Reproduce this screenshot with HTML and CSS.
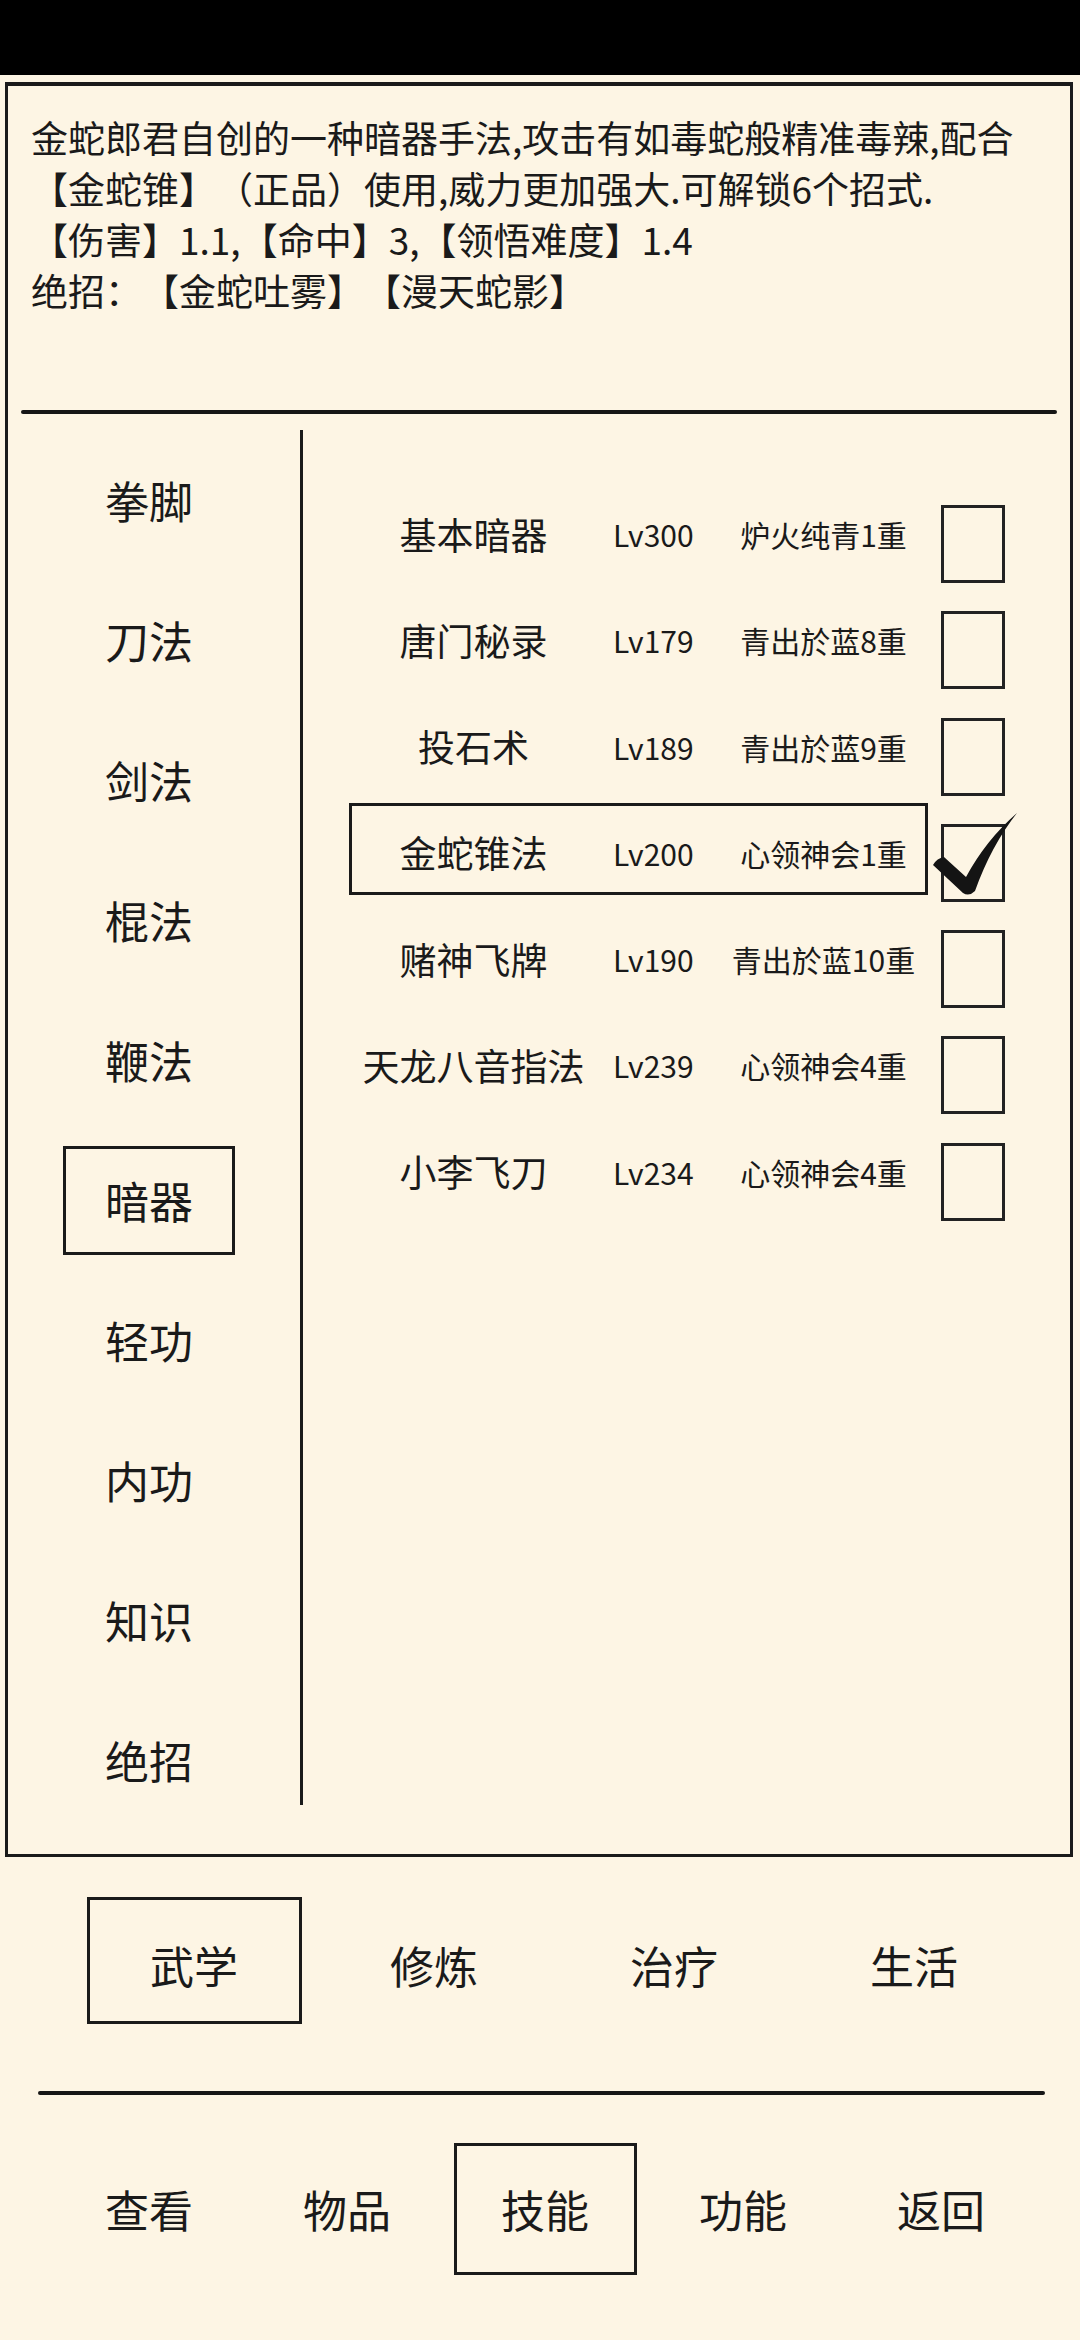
FILE: index.html
```html
<!DOCTYPE html>
<html lang="zh-CN">
<head>
<meta charset="utf-8">
<title>技能</title>
<link rel="stylesheet" href="styles.css">
</head>
<body>
<div class="statusbar"></div>
<div class="frame">
  <div class="desc">
    <div class="line">金蛇郎君自创的一种暗器手法,攻击有如毒蛇般精准毒辣,配合</div>
    <div class="line">【金蛇锥】（正品）使用,威力更加强大.可解锁6个招式.</div>
    <div class="line">【伤害】1.1,【命中】3,【领悟难度】1.4</div>
    <div class="line">绝招：【金蛇吐雾】【漫天蛇影】</div>
  </div>
  <div class="hr"></div>
  <div class="content">
    <div class="cats">
      <div class="cat"><span class="cat-label">拳脚</span></div>
      <div class="cat"><span class="cat-label">刀法</span></div>
      <div class="cat"><span class="cat-label">剑法</span></div>
      <div class="cat"><span class="cat-label">棍法</span></div>
      <div class="cat"><span class="cat-label">鞭法</span></div>
      <div class="cat"><span class="cat-label active">暗器</span></div>
      <div class="cat"><span class="cat-label">轻功</span></div>
      <div class="cat"><span class="cat-label">内功</span></div>
      <div class="cat"><span class="cat-label">知识</span></div>
      <div class="cat"><span class="cat-label">绝招</span></div>
    </div>
    <div class="vline"></div>
    <div class="list">
      <div class="row">
        <div class="main"><span class="name">基本暗器</span><span class="lv">Lv300</span><span class="stage">炉火纯青1重</span></div>
        <div class="box"></div>
      </div>
      <div class="row">
        <div class="main"><span class="name">唐门秘录</span><span class="lv">Lv179</span><span class="stage">青出於蓝8重</span></div>
        <div class="box"></div>
      </div>
      <div class="row">
        <div class="main"><span class="name">投石术</span><span class="lv">Lv189</span><span class="stage">青出於蓝9重</span></div>
        <div class="box"></div>
      </div>
      <div class="row">
        <div class="main selected"><span class="name">金蛇锥法</span><span class="lv">Lv200</span><span class="stage">心领神会1重</span></div>
        <div class="box checked">
          <svg class="tick" width="84" height="82" viewBox="0 0 84 82"><path d="M0,52 Q4,45 11,44 L33,64 Q53,27 84,0 Q58,33 42,78 Q36,84 30,80 Z" fill="#141414"/></svg>
        </div>
      </div>
      <div class="row">
        <div class="main"><span class="name">赌神飞牌</span><span class="lv">Lv190</span><span class="stage">青出於蓝10重</span></div>
        <div class="box"></div>
      </div>
      <div class="row">
        <div class="main"><span class="name">天龙八音指法</span><span class="lv">Lv239</span><span class="stage">心领神会4重</span></div>
        <div class="box"></div>
      </div>
      <div class="row">
        <div class="main"><span class="name">小李飞刀</span><span class="lv">Lv234</span><span class="stage">心领神会4重</span></div>
        <div class="box"></div>
      </div>
    </div>
  </div>
</div>
<div class="tabs">
  <div class="tab"><span class="tab-label active">武学</span></div>
  <div class="tab"><span class="tab-label">修炼</span></div>
  <div class="tab"><span class="tab-label">治疗</span></div>
  <div class="tab"><span class="tab-label">生活</span></div>
</div>
<div class="hr2"></div>
<div class="nav">
  <div class="nav-item"><span class="nav-label">查看</span></div>
  <div class="nav-item"><span class="nav-label">物品</span></div>
  <div class="nav-item"><span class="nav-label active">技能</span></div>
  <div class="nav-item"><span class="nav-label">功能</span></div>
  <div class="nav-item"><span class="nav-label">返回</span></div>
</div>
</body>
</html>
```

FILE: styles.css
```css
* { box-sizing: border-box; }
html, body {
  margin: 0;
  padding: 0;
}
body {
  width: 1080px;
  height: 2340px;
  background: #fdf5e4;
  color: #1a1a1a;
  font-family: "Noto Sans CJK SC", "Noto Sans", sans-serif;
  text-spacing-trim: space-all;
  overflow: hidden;
}
.statusbar {
  height: 75px;
  background: #000;
}
.frame {
  margin: 7px 0 0 5px;
  width: 1068px;
  height: 1775px;
  border: 3px solid #1a1a1a;
  border-top-width: 4px;
}
.desc {
  height: 324px;
  padding: 26px 0 0 23px;
  font-size: 37px;
  line-height: 51px;
}
.line { white-space: nowrap; }
.hr {
  height: 4px;
  margin: 0 13px;
  background: #161616;
  border-radius: 2px;
}
.content {
  display: flex;
  height: 1440px;
}
.cats {
  width: 282px;
  padding-top: 16px;
  display: flex;
  flex-direction: column;
}
.cat {
  height: 140px;
  display: flex;
  align-items: center;
  justify-content: center;
}
.cat-label {
  width: 172px;
  height: 109px;
  border: 3px solid transparent;
  display: flex;
  align-items: center;
  justify-content: center;
  font-size: 44px;
  line-height: 1;
}
.cat-label.active { border-color: #1a1a1a; }
.vline {
  width: 3px;
  margin: 16px 0 49px 10px;
  background: #1a1a1a;
}
.list {
  padding: 68px 0 0 46px;
}
.row {
  height: 106.3px;
  display: grid;
  grid-template-columns: 579px 64px;
  column-gap: 13px;
  align-items: start;
}
.main {
  height: 92px;
  margin-top: 2px;
  padding-top: 8px;
  border: 3px solid transparent;
  display: grid;
  grid-template-columns: 243px 127px 203px;
  align-items: center;
  line-height: 1;
}
.main.selected { border-color: #1a1a1a; }
.name {
  font-size: 37px;
  text-align: center;
  white-space: nowrap;
}
.lv {
  font-size: 30px;
  padding-left: 18px;
}
.stage {
  font-size: 30px;
  text-align: center;
  white-space: nowrap;
}
.box {
  position: relative;
  width: 64px;
  height: 78px;
  margin-top: 23px;
  border: 3px solid #222;
}
.tick {
  position: absolute;
  left: -11px;
  top: -14px;
}
.tabs {
  margin-top: 40px;
  padding-left: 74px;
  display: flex;
}
.tab {
  width: 240px;
  height: 127px;
  display: flex;
  justify-content: center;
}
.tab-label {
  width: 215px;
  height: 127px;
  padding-top: 8px;
  border: 3px solid transparent;
  display: flex;
  align-items: center;
  justify-content: center;
  font-size: 44px;
  line-height: 1;
}
.tab-label.active { border-color: #1a1a1a; }
.hr2 {
  margin: 67px 0 0 38px;
  width: 1007px;
  height: 4px;
  background: #161616;
  border-radius: 2px;
}
.nav {
  margin-top: 48px;
  padding-left: 50px;
  display: flex;
}
.nav-item {
  width: 198px;
  height: 132px;
  display: flex;
  justify-content: center;
}
.nav-label {
  width: 183px;
  height: 132px;
  border: 3px solid transparent;
  display: flex;
  align-items: center;
  justify-content: center;
  font-size: 44px;
  line-height: 1;
}
.nav-label.active { border-color: #1a1a1a; }
```
